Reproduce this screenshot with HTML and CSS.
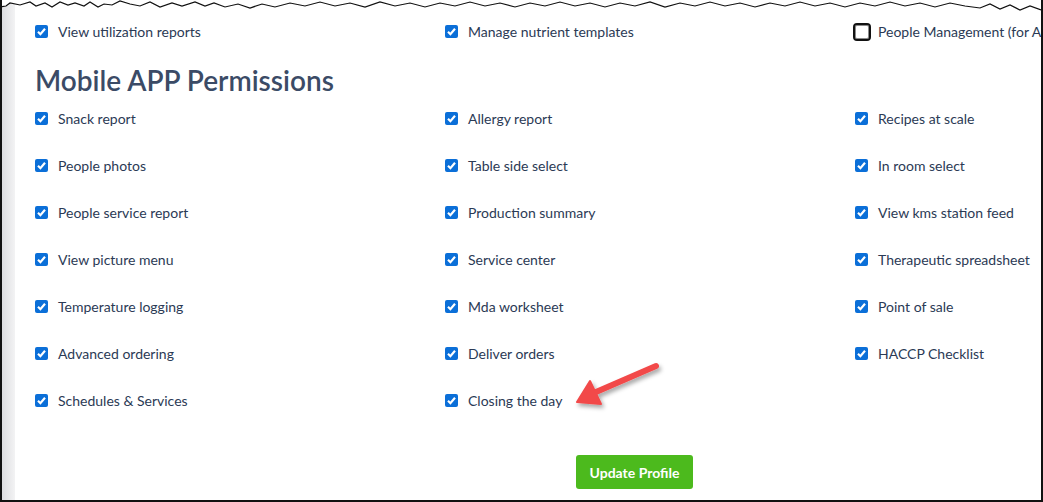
FILE: index.html
```html
<!DOCTYPE html>
<html lang="en">
<head>
    <meta charset="UTF-8">
    <title>Permissions</title>
    <link rel="stylesheet" href="styles.css">
</head>
<body>
    <div class="frame">
        <div class="gutter"></div>
        <div class="content">
            <div class="grid">
                <div class="perm"><span class="box"></span>View utilization reports</div>
                <div class="perm"><span class="box"></span>Manage nutrient templates</div>
                <div class="perm"><span class="box off"></span>People Management (for A</div>
            </div>

            <h2 class="heading">Mobile APP Permissions</h2>

            <div class="grid">
                <div class="perm"><span class="box"></span>Snack report</div>
                <div class="perm"><span class="box"></span>Allergy report</div>
                <div class="perm"><span class="box"></span>Recipes at scale</div>

                <div class="perm"><span class="box"></span>People photos</div>
                <div class="perm"><span class="box"></span>Table side select</div>
                <div class="perm"><span class="box"></span>In room select</div>

                <div class="perm"><span class="box"></span>People service report</div>
                <div class="perm"><span class="box"></span>Production summary</div>
                <div class="perm"><span class="box"></span>View kms station feed</div>

                <div class="perm"><span class="box"></span>View picture menu</div>
                <div class="perm"><span class="box"></span>Service center</div>
                <div class="perm"><span class="box"></span>Therapeutic spreadsheet</div>

                <div class="perm"><span class="box"></span>Temperature logging</div>
                <div class="perm"><span class="box"></span>Mda worksheet</div>
                <div class="perm"><span class="box"></span>Point of sale</div>

                <div class="perm"><span class="box"></span>Advanced ordering</div>
                <div class="perm"><span class="box"></span>Deliver orders</div>
                <div class="perm"><span class="box"></span>HACCP Checklist</div>

                <div class="perm"><span class="box"></span>Schedules &amp; Services</div>
                <div class="perm"><span class="box"></span>Closing the day</div>
            </div>

            <div class="actions">
                <button class="update-btn">Update Profile</button>
            </div>
        </div>

        <!-- torn top edge of the screenshot -->
        <svg class="torn" width="1043" height="22" viewBox="0 0 1043 22">
            <path d="M0 22 L0 7 L6 6 L10 3 L20 5 L30 2 L36 6 L45 3 L52 7 L60 2 L68 5 L75 3 L84 6 L90 2 L98 7 L104 4 L112 5 L120 1 L130 4 L140 6 L150 2 L160 7 L172 3 L182 6 L195 2 L205 6 L214 3 L225 7 L238 4 L250 8 L262 4 L275 7 L290 3 L305 6 L320 2 L335 6 L350 3 L365 7 L380 2 L395 6 L410 3 L425 7 L440 3 L455 6 L470 2 L485 6 L500 3 L515 7 L530 3 L545 6 L560 2 L575 6 L590 3 L605 7 L620 3 L635 6 L650 2 L665 7 L680 3 L695 6 L710 2 L725 6 L740 3 L755 7 L770 3 L785 6 L800 2 L815 6 L830 3 L845 7 L860 3 L875 6 L890 2 L905 6 L920 3 L935 7 L950 3 L965 6 L980 8 L990 4 L1000 9 L1010 5 L1020 10 L1030 6 L1041 10 L1043 10 L1043 0 L0 0 Z" fill="#fff"/>
            <path d="M0 7 L6 6 L10 3 L20 5 L30 2 L36 6 L45 3 L52 7 L60 2 L68 5 L75 3 L84 6 L90 2 L98 7 L104 4 L112 5 L120 1 L130 4 L140 6 L150 2 L160 7 L172 3 L182 6 L195 2 L205 6 L214 3 L225 7 L238 4 L250 8 L262 4 L275 7 L290 3 L305 6 L320 2 L335 6 L350 3 L365 7 L380 2 L395 6 L410 3 L425 7 L440 3 L455 6 L470 2 L485 6 L500 3 L515 7 L530 3 L545 6 L560 2 L575 6 L590 3 L605 7 L620 3 L635 6 L650 2 L665 7 L680 3 L695 6 L710 2 L725 6 L740 3 L755 7 L770 3 L785 6 L800 2 L815 6 L830 3 L845 7 L860 3 L875 6 L890 2 L905 6 L920 3 L935 7 L950 3 L965 6 L980 8 L990 4 L1000 9 L1010 5 L1020 10 L1030 6 L1041 10" fill="none" stroke="#111" stroke-width="1.2"/>
        </svg>

        <!-- annotation arrow -->
        <svg class="arrow" width="110" height="60" viewBox="0 0 110 60">
            <defs>
                <filter id="sh" x="-20%" y="-20%" width="150%" height="150%">
                    <feDropShadow dx="2" dy="3" stdDeviation="2" flood-color="#000" flood-opacity="0.35"/>
                </filter>
            </defs>
            <g filter="url(#sh)" fill="#f24a4a" stroke="#f24a4a" stroke-linejoin="round">
                <line x1="84" y1="6" x2="24" y2="32" stroke-width="6" stroke-linecap="round"/>
                <polygon points="5,42 18,21 29,44" stroke-width="2"/>
            </g>
        </svg>
    </div>
</body>
</html>
```

FILE: styles.css
```css
body {
    margin: 0;
    padding: 0;
    background-color: #fff;
    font-family: "Lato", "Liberation Sans", sans-serif;
}
.frame {
    position: relative;
    width: 1043px;
    height: 502px;
    box-sizing: border-box;
    border-left: 2px solid #111;
    border-right: 2px solid #111;
    border-bottom: 2px solid #111;
    display: flex;
    overflow: hidden;
    background-color: #fff;
}
.gutter {
    width: 13px;
    flex-shrink: 0;
    background: linear-gradient(to right, #dcdde0, #f3f3f4);
}
.content {
    flex: 1;
    min-width: 0;
    padding: 8px 0 0 20px;
}
.grid {
    display: grid;
    grid-template-columns: 410px 410px 1fr;
}
.perm {
    height: 47px;
    display: flex;
    align-items: center;
    font-size: 14px;
    color: #2b3a55;
    white-space: nowrap;
}
.box {
    flex-shrink: 0;
    width: 13px;
    height: 13px;
    border-radius: 2px;
    margin-right: 10px;
    background: #0b6fd8 url("data:image/svg+xml,%3Csvg xmlns='http://www.w3.org/2000/svg' viewBox='0 0 13 13'%3E%3Cpath d='M3 6.8 L5.4 9.2 L10 3.8' fill='none' stroke='%23fff' stroke-width='2.2'/%3E%3C/svg%3E") no-repeat center;
}
.box.off {
    width: 14px;
    height: 14px;
    margin-left: -2px;
    margin-right: 7px;
    background: #fff;
    border: 2px solid #111;
    border-radius: 4px;
    box-shadow: inset 0 0 0 1px #8a8a8a;
}
.heading {
    margin: 0;
    height: 40px;
    line-height: 50px;
    font-size: 28px;
    font-weight: 600;
    color: #3b4b66;
}
.actions {
    padding-left: 541px;
    padding-top: 31px;
}
.update-btn {
    width: 117px;
    height: 34px;
    border: none;
    border-radius: 3px;
    background-color: #4cba1d;
    color: #fff;
    font-family: "Lato", "Liberation Sans", sans-serif;
    font-size: 14px;
    font-weight: bold;
    cursor: pointer;
}
.torn {
    position: absolute;
    left: -2px;
    top: 0;
}
.arrow {
    position: absolute;
    left: 570px;
    top: 360px;
}
```
